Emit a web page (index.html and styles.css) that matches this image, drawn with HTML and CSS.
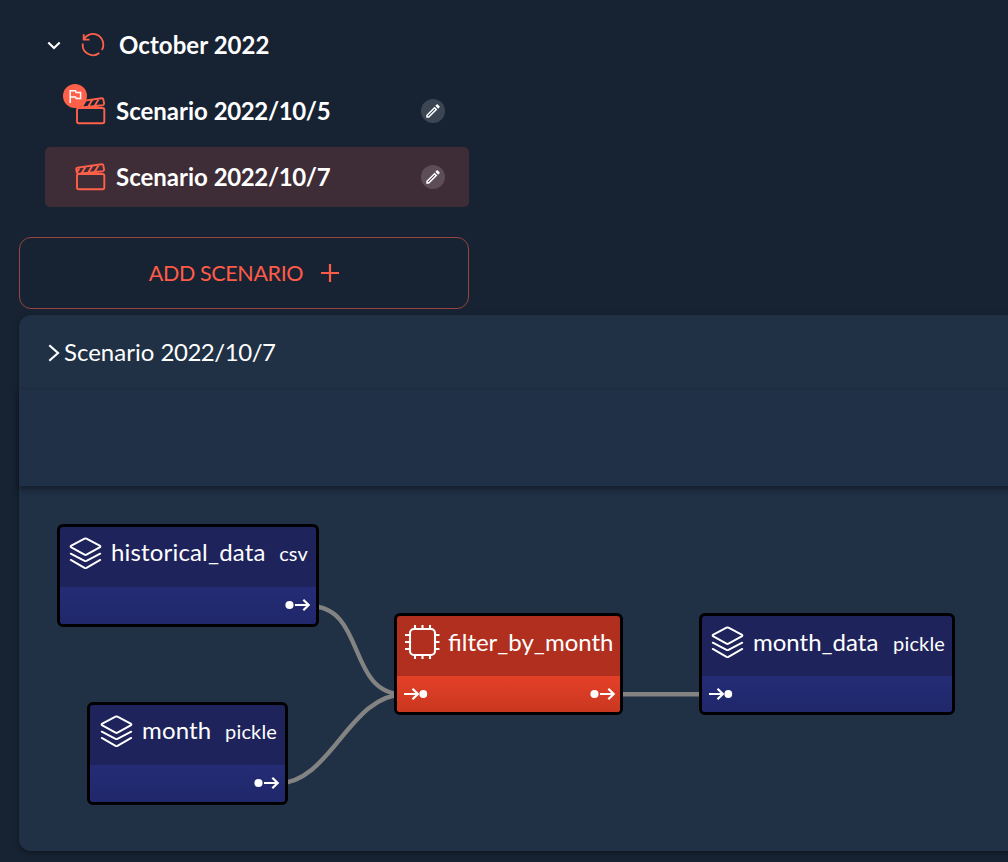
FILE: index.html
```html
<!DOCTYPE html>
<html lang="en">
<head>
<meta charset="utf-8">
<title>Scenarios</title>
<link rel="stylesheet" href="styles.css">
</head>
<body>
<svg class="defs" width="0" height="0">
  <symbol id="clap" viewBox="0 0 32 28"><g fill="none" stroke="currentColor" stroke-width="1.9" stroke-linejoin="round"><rect x="2" y="11" width="27.3" height="15.2" rx="1.8"/><path d="M2 10.2 1.2 6.3q-.1-1.4 1.3-1.7L26.6 1.2q1.4-.2 1.7 1.1l.8 4.4Q29 8 27.7 8.200L2 11M6.600 10.200l4.200-6.800M13.200 9.500l4.200-6.800M19.800 8.600 24 1.800M2 9.300l3-5"/></g></symbol>
  <symbol id="pencil" viewBox="0 0 24 24"><path fill="currentColor" d="m14.060 9.020.920.920L5.920 19H5v-.92zM17.660 3c-.25 0-.51.1-.7.290l-1.830 1.830 3.750 3.750 1.830-1.830c.390-.390.390-1.020 0-1.410l-2.340-2.340c-.2-.2-.430-.290-.680-.290m-3.600 3.190L3 17.250V21h3.750L17.810 9.940z"/></symbol>
  <symbol id="layers" viewBox="0 0 34 34"><g fill="none" stroke="currentColor" stroke-width="2" stroke-linecap="round" stroke-linejoin="round"><path d="M16 1.700q1-.5 2 0l13.600 7.200q1.500.9 0 1.800L18 18.200q-1 .6-2 0L2.400 10.700q-1.500-.9 0-1.800z"/><path d="m1.800 17.200 14.200 7.400q1 .5 2 0l14.200-7.400M1.800 23.600 16 31.800q1 .5 2 0l14.200-8.200"/></g></symbol>
  <symbol id="chip" viewBox="0 0 36 36"><g fill="none" stroke="currentColor" stroke-width="2.100"><rect x="6" y="5" width="25" height="26" rx="4"/><path d="M11 5V1M18.500 5V1M26 5V1M11 35v-4M18.500 35v-4M26 35v-4M6 11H1M6 18H1M6 25H1M35.500 11H31M35.500 18H31M35.500 25H31"/></g></symbol>
  <symbol id="out" viewBox="0 0 26 14"><circle cx="4.500" cy="7" r="4.100" fill="currentColor"/><path d="M10 7h13.500M18.300 1.800 23.700 7l-5.400 5.200" fill="none" stroke="currentColor" stroke-width="2.200"/></symbol>
  <symbol id="in" viewBox="0 0 26 14"><path d="M1 7h14M9.500 1.800 14.900 7l-5.400 5.200" fill="none" stroke="currentColor" stroke-width="2.200"/><circle cx="20.300" cy="7" r="3.900" fill="currentColor"/></symbol>
</svg>

<section class="tree">
  <div class="row cycle">
    <svg class="chevron" viewBox="0 0 14 9"><path d="m1.300 1.500 5.700 5.500 5.700-5.500" fill="none" stroke="#fff" stroke-width="2.100"/></svg>
    <svg class="cycle-icon" viewBox="0 0 24 24"><path d="M3.200 5.900A10.300 10.300 0 0 1 22.300 11.500Q22.400 14.600 20.900 17M18.300 20A10.300 10.300 0 0 1 1.800 10.500M2.700 1.200V6.700H8.500" fill="none" stroke="#ff6049" stroke-width="1.800"/></svg>
    <span class="label">October 2022</span>
  </div>
  <div class="row scenario">
    <span class="clap-wrap"><svg class="clap"><use href="#clap"/></svg><span class="flag"><svg viewBox="0 0 14 14"><path d="M2.200 14V1.700h5.300l.6 1.700h4.500v6.100H8.200l-.7-1.500H2.200" fill="none" stroke="#fff" stroke-width="1.500"/></svg></span></span>
    <span class="label">Scenario <span class="date">2022/10/5</span></span>
    <button class="edit"><svg><use href="#pencil"/></svg></button>
  </div>
  <div class="row scenario selected">
    <span class="clap-wrap"><svg class="clap"><use href="#clap"/></svg></span>
    <span class="label">Scenario <span class="date">2022/10/7</span></span>
    <button class="edit"><svg><use href="#pencil"/></svg></button>
  </div>
</section>
<button class="add"><span>ADD SCENARIO</span><svg viewBox="0 0 18 18"><path d="M9 0v18M0 9h18" stroke="currentColor" stroke-width="2.200"/></svg></button>

<section class="panel">
  <header class="panel-head"><svg viewBox="0 0 12 18"><path d="m1.300 1.200 8.700 7.800-8.700 7.800" fill="none" stroke="#fff" stroke-width="2.200"/></svg><span class="title">Scenario <span class="date">2022/10/7</span></span></header>
  <div class="toolbar"></div>
  <div class="canvas">
    <svg class="edges" viewBox="0 0 989 365"><g fill="none" stroke="#838383" stroke-width="4.400"><path d="M290 120C348 120 327 208.500 385 208.500M258 297.500C312 297.500 330 208.500 385 208.500M594 208.300H690"/></g></svg>
    <div class="node historical">
      <div class="node-head"><svg class="layers"><use href="#layers"/></svg><span class="name">historical_data</span><span class="type">csv</span></div>
      <div class="ports end"><svg><use href="#out"/></svg></div>
    </div>
    <div class="node month">
      <div class="node-head"><svg class="layers"><use href="#layers"/></svg><span class="name">month</span><span class="type">pickle</span></div>
      <div class="ports end"><svg><use href="#out"/></svg></div>
    </div>
    <div class="node task">
      <div class="node-head"><svg class="chip"><use href="#chip"/></svg><span class="name">filter_by_month</span></div>
      <div class="ports"><svg><use href="#in"/></svg><svg><use href="#out"/></svg></div>
    </div>
    <div class="node output">
      <div class="node-head"><svg class="layers"><use href="#layers"/></svg><span class="name">month_data</span><span class="type">pickle</span></div>
      <div class="ports"><svg><use href="#in"/></svg></div>
    </div>
  </div>
</section>
</body>
</html>
```

FILE: styles.css
```css
* { box-sizing: border-box; }
body { margin: 0; height: 862px; overflow: hidden; background: #172333; color: #fff; font-family: Lato, sans-serif; font-size: 24px; }
.defs { display: block; height: 0; }
svg { display: block; flex: none; }
button { font: inherit; border: 0; padding: 0; margin: 0; color: inherit; }
.tree { padding: 15px 0 0 45px; width: 469px; font-weight: 700; }
.row { display: flex; align-items: center; height: 60px; white-space: nowrap; }
.cycle { padding-left: 2px; }
.chevron { width: 14px; height: 9px; margin: 1px 20px 0 0; }
.cycle-icon { width: 24px; height: 24px; margin-right: 14px; }
.label { flex: 1; padding-bottom: 2px; }
.cycle .label { letter-spacing: .06px; }
.scenario { padding: 0 24px 0 30px; margin-top: 6px; border-radius: 5px; }
.scenario .date { letter-spacing: -.36px; }
.selected { background: #3e2c36; }
.clap-wrap { position: relative; width: 41px; color: #ff6049; }
.clap { width: 32px; height: 28px; }
.flag { position: absolute; left: -12px; top: -13px; width: 24px; height: 24px; border-radius: 50%; background: #ff6049; display: flex; align-items: center; justify-content: center; }
.flag svg { width: 14px; height: 14px; }
.edit { width: 24px; height: 24px; border-radius: 50%; background: rgba(255, 255, 255, .16); display: flex; align-items: center; justify-content: center; }
.edit svg { width: 18px; height: 18px; }
.add { width: 450px; height: 72px; margin: 30px 0 6px 19px; border: 1px solid #95463f; border-radius: 12px; background: none; color: #ff5b47; display: flex; align-items: center; justify-content: center; gap: 18px; font-size: 21.5px; letter-spacing: -.38px; }
.add svg { width: 18px; height: 18px; }
.panel { margin-left: 19px; width: 1001px; height: 536px; border-radius: 12px; background: #203045; box-shadow: 0 2px 6px rgba(0, 0, 0, .35); }
.panel-head { height: 75px; display: flex; align-items: center; gap: 4px; padding-left: 29px; }
.title { padding-bottom: 2px; }
.panel-head .date { letter-spacing: -.45px; }
.panel-head svg { width: 12px; height: 18px; }
.toolbar { height: 96px; background: #203046; box-shadow: 0 3px 7px rgba(0, 0, 0, .42); }
.canvas { position: relative; height: 365px; }
.edges { position: absolute; left: 0; top: 0; width: 989px; height: 365px; }
.node { position: absolute; height: 102px; border: 3px solid #000; border-radius: 6px; background: #1e235b; overflow: hidden; white-space: nowrap; }
.historical { left: 38px; top: 38px; width: 262px; height: 103px; }
.historical .name { letter-spacing: .17px; }
.month { left: 68px; top: 216px; width: 201px; height: 103px; }
.month .name { letter-spacing: .17px; }
.task { left: 375px; top: 127px; width: 229px; background: #b12f1f; }
.output { left: 680px; top: 127px; width: 256px; }
.node-head { display: flex; align-items: center; height: 60px; padding: 0 7px 8px 9px; }
.month .node-head { padding-left: 10px; }
.task .node-head { padding-left: 7px; }
.name { padding-bottom: 3px; }
.task .name, .output .name { padding-bottom: 1px; }
.layers { width: 33px; height: 33px; margin-right: 9px; }
.chip { width: 36px; height: 36px; margin-right: 8px; }
.type { margin-left: auto; font-size: 20px; letter-spacing: .15px; }
.historical .type, .month .type { margin-right: 1px; padding-bottom: 1px; }
.output .type { padding-top: 2px; }
.ports { display: flex; justify-content: space-between; align-items: center; height: 36px; padding: 0 4px 0 6px; background: linear-gradient(#242c75, #20276a); }
.ports.end { justify-content: flex-end; padding-right: 5px; }
.historical .ports, .month .ports { height: 37px; padding-bottom: 1px; }
.ports svg { width: 26px; height: 14px; }
.task .ports { background: linear-gradient(#e54028, #c93720); }
```
